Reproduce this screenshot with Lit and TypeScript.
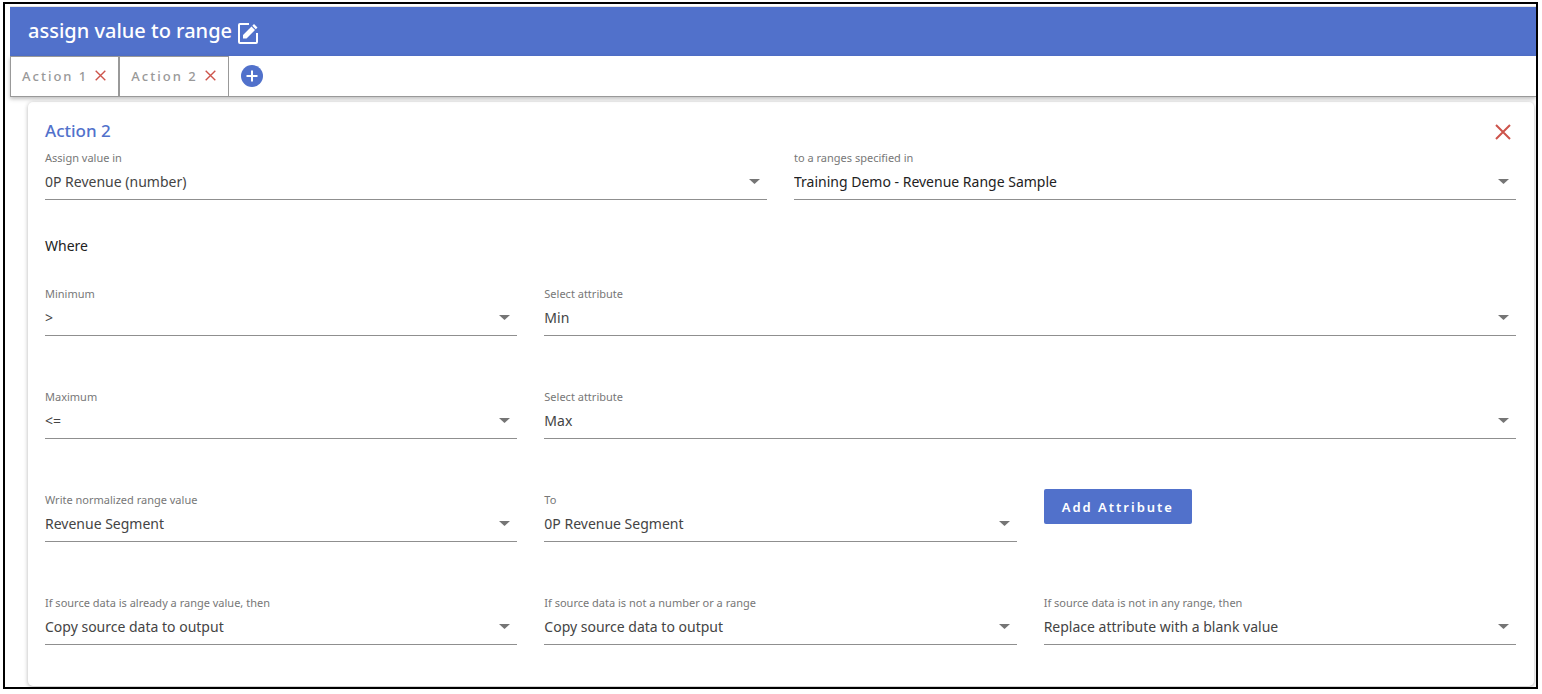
import { LitElement, html, css, svg } from "lit";
import { customElement, property, state } from "lit/decorators.js";

const closeIcon = svg`<path d="M1 1 L15 15 M15 1 L1 15" fill="none" stroke="currentColor" stroke-width="2"/>`;

@customElement("select-field")
class SelectField extends LitElement {
  @property() label = "";
  @property() value = "";
  @property({ type: Boolean, reflect: true }) strong = false;

  static styles = css`
    :host {
      display: block;
      min-width: 0;
      color: #444;
    }
    :host([strong]) {
      color: #222;
    }
    .label {
      display: block;
      font-size: 11px;
      line-height: 16px;
      color: #777;
    }
    .box {
      display: grid;
      align-items: center;
      margin-top: 2px;
      padding-bottom: 5px;
      border-bottom: 1px solid #8f8f8f;
    }
    .control {
      grid-area: 1 / 1;
      width: 100%;
      height: 26px;
      margin: 0;
      padding: 0 28px 0 0;
      border: 0;
      border-radius: 0;
      appearance: none;
      background: transparent;
      color: inherit;
      font: inherit;
      font-size: 14px;
    }
    .arrow {
      grid-area: 1 / 1;
      justify-self: end;
      width: 11px;
      height: 5px;
      margin-right: 7px;
      fill: #757575;
      pointer-events: none;
    }
  `;

  render() {
    return html`
      <label class="label" for="control">${this.label}</label>
      <div class="box">
        <select class="control" id="control">
          <option selected>${this.value}</option>
        </select>
        <svg class="arrow" viewBox="0 0 11 5" aria-hidden="true"><path d="M0 0h11L5.500 5z" /></svg>
      </div>
    `;
  }
}

@customElement("app-root")
class AppRoot extends LitElement {
  @state() tabs = ["Action 1", "Action 2"];

  static styles = css`
    :host {
      display: block;
      box-sizing: border-box;
      min-height: 100vh;
      padding: 2px 4px 4px 3px;
      background: #fff;
      font-family: "Noto Sans", "Open Sans", sans-serif;
    }
    * {
      box-sizing: border-box;
    }
    button {
      margin: 0;
      padding: 0;
      border: 0;
      background: none;
      font: inherit;
      color: inherit;
      cursor: pointer;
    }
    .frame {
      border: 2px solid #000;
      padding: 2px 0 1px 5px;
      overflow: hidden;
    }
    .header {
      display: flex;
      align-items: center;
      gap: 6px;
      height: 50px;
      padding: 0 18px 2px;
      border-top: 1px solid #e6e6e6;
      background: #5171cb;
      color: #fff;
    }
    .title {
      margin: 0;
      font-size: 20px;
      line-height: 28px;
      font-weight: 500;
    }
    .edit {
      width: 21px;
      height: 21px;
      margin-top: 5px;
    }
    .icon {
      display: block;
      width: 100%;
      height: 100%;
    }
    .tabs {
      position: relative;
      display: flex;
      align-items: center;
      height: 41px;
      border-bottom: 1px solid #999;
      background: #fff;
      box-shadow: 0 2px 4px rgba(0, 0, 0, 0.25);
    }
    .tab {
      display: flex;
      align-items: center;
      gap: 7px;
      height: 40px;
      padding: 0 12px 2px 11px;
      border: 1px solid #999;
      border-bottom: 0;
    }
    .tab-name {
      font-size: 13px;
      font-weight: 500;
      letter-spacing: 2px;
      color: #999;
    }
    .tab-close {
      width: 11px;
      height: 11px;
      color: #cd544b;
    }
    .add {
      width: 22px;
      height: 22px;
      margin-left: 12px;
      border-radius: 50%;
      color: #5171cb;
    }
    .card {
      margin: 5px 2px 0 18px;
      padding: 18px 18px 41px 17px;
      border-radius: 5px;
      background: #fff;
      box-shadow: 0 1px 4px rgba(0, 0, 0, 0.3);
    }
    .card-head {
      display: flex;
      align-items: center;
      justify-content: space-between;
      height: 24px;
      padding-right: 5px;
    }
    .card-title {
      margin: 0;
      padding-bottom: 2px;
      font-size: 17px;
      line-height: 22px;
      font-weight: 500;
      color: #5171cb;
    }
    .card-close {
      width: 16px;
      height: 16px;
      color: #cd544b;
    }
    .row {
      display: grid;
      grid-template-columns: repeat(3, minmax(0, 1fr));
      column-gap: 27px;
      margin-top: 53px;
    }
    .halves {
      grid-template-columns: repeat(2, minmax(0, 1fr));
      margin-top: 6px;
    }
    .where {
      margin: 34px 0 0;
      font-size: 14px;
      line-height: 24px;
      color: #222;
    }
    .after-where {
      margin-top: 28px;
    }
    .wide {
      grid-column: span 2;
    }
    .primary {
      justify-self: start;
      height: 35px;
      padding: 0 18px;
      margin-top: -3px;
      border-radius: 2px;
      background: #5171cb;
      color: #fff;
      font-size: 13px;
      font-weight: 600;
      letter-spacing: 2px;
    }
  `;

  render() {
    return html`
      <main class="frame">
        <header class="header">
          <h1 class="title">assign value to range</h1>
          <button class="edit" aria-label="Edit name">
            <svg class="icon" viewBox="0 0 21 21" fill="none" stroke="#fff" stroke-width="2">
              <path d="M11 1H2a1 1 0 0 0-1 1v17a1 1 0 0 0 1 1h16a1 1 0 0 0 1-1v-9" />
              <path d="M5 15.500v-3.500l8.500-8.500 3.500 3.500L8.500 15.500z M14.300 2.700l1.700-1.700 3.500 3.500-1.700 1.700z" fill="#fff" stroke="none" />
            </svg>
          </button>
        </header>
        <nav class="tabs" aria-label="Actions">
          ${this.tabs.map(
            (name) => html`
              <div class="tab">
                <button class="tab-name">${name}</button>
                <button class="tab-close" aria-label="Remove ${name}">
                  <svg class="icon" viewBox="0 0 16 16">${closeIcon}</svg>
                </button>
              </div>
            `
          )}
          <button class="add" aria-label="Add action">
            <svg class="icon" viewBox="0 0 22 22">
              <circle cx="11" cy="11" r="11" fill="currentColor" />
              <path d="M11 5.500v11M5.500 11h11" stroke="#fff" stroke-width="2" />
            </svg>
          </button>
        </nav>
        <section class="card">
          <div class="card-head">
            <h2 class="card-title">Action 2</h2>
            <button class="card-close" aria-label="Close action">
              <svg class="icon" viewBox="0 0 16 16">${closeIcon}</svg>
            </button>
          </div>
          <div class="row halves">
            <select-field label="Assign value in" value="0P Revenue (number)"></select-field>
            <select-field strong label="to a ranges specified in" value="Training Demo - Revenue Range Sample"></select-field>
          </div>
          <p class="where">Where</p>
          <div class="row after-where">
            <select-field label="Minimum" value=">"></select-field>
            <select-field class="wide" label="Select attribute" value="Min"></select-field>
          </div>
          <div class="row">
            <select-field label="Maximum" value="<="></select-field>
            <select-field class="wide" label="Select attribute" value="Max"></select-field>
          </div>
          <div class="row">
            <select-field label="Write normalized range value" value="Revenue Segment"></select-field>
            <select-field label="To" value="0P Revenue Segment"></select-field>
            <button class="primary">Add Attribute</button>
          </div>
          <div class="row">
            <select-field label="If source data is already a range value, then" value="Copy source data to output"></select-field>
            <select-field label="If source data is not a number or a range" value="Copy source data to output"></select-field>
            <select-field label="If source data is not in any range, then" value="Replace attribute with a blank value"></select-field>
          </div>
        </section>
      </main>
    `;
  }
}
